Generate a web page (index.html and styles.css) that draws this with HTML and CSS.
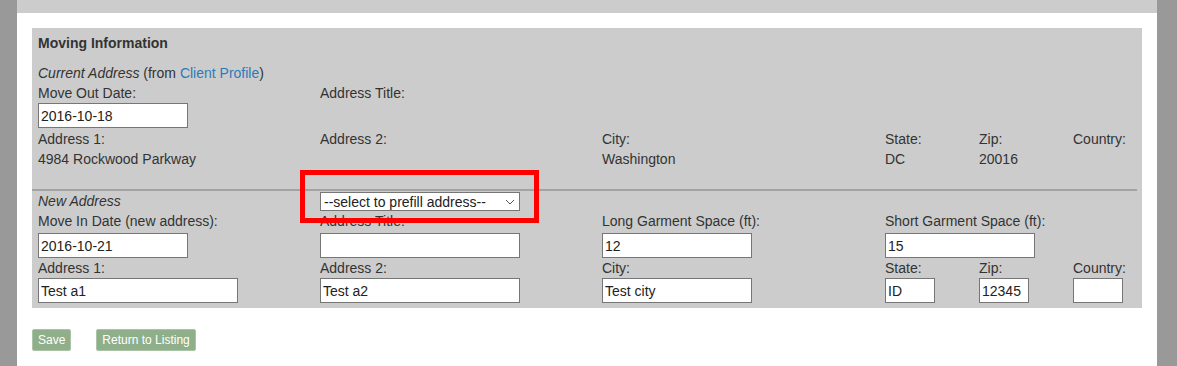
FILE: index.html
```html
<!DOCTYPE html>
<html lang="en">
<head>
<meta charset="UTF-8">
<meta name="viewport" content="width=device-width, initial-scale=1.0">
<title>Moving Information</title>
<link rel="stylesheet" href="styles.css">
</head>
<body>
<div class="page">
  <div class="topbar"></div>
  <div class="content">
    <div class="panel">
      <div class="title">Moving Information</div>

      <div class="grid">
        <div class="all"><em>Current Address</em> (from <a href="#">Client Profile</a>)</div>
        <div class="c1">Move Out Date:</div>
        <div class="c2">Address Title:</div>
        <div class="c1"><input class="w150 first" type="text" value="2016-10-18"></div>
        <div class="c1">Address 1:</div>
        <div class="c2">Address 2:</div>
        <div class="c3">City:</div>
        <div class="c4">State:</div>
        <div class="c5">Zip:</div>
        <div class="c6">Country:</div>
        <div class="c1">4984 Rockwood Parkway</div>
        <div class="c3">Washington</div>
        <div class="c4">DC</div>
        <div class="c5">20016</div>

        <div class="divider"></div>

        <div class="c1"><em>New Address</em></div>
        <div class="c2">
          <div class="select-wrap">
            <select class="prefill">
              <option>--select to prefill address--</option>
            </select>
            <svg class="chevron" width="10" height="6" viewBox="0 0 10 6"><path d="M1 1l4 4 4-4" fill="none" stroke="#555" stroke-width="1"/></svg>
          </div>
        </div>
        <div class="c1">Move In Date (new address):</div>
        <div class="c2">Address Title:</div>
        <div class="c3">Long Garment Space (ft):</div>
        <div class="c4 wide">Short Garment Space (ft):</div>
        <div class="c1"><input class="w150 gap" type="text" value="2016-10-21"></div>
        <div class="c2"><input class="w200 gap" type="text" value=""></div>
        <div class="c3"><input class="w150 gap" type="text" value="12"></div>
        <div class="c4 wide"><input class="w150 gap" type="text" value="15"></div>
        <div class="c1">Address 1:</div>
        <div class="c2">Address 2:</div>
        <div class="c3">City:</div>
        <div class="c4">State:</div>
        <div class="c5">Zip:</div>
        <div class="c6">Country:</div>
        <div class="c1"><input class="w200" type="text" value="Test a1"></div>
        <div class="c2"><input class="w200" type="text" value="Test a2"></div>
        <div class="c3"><input class="w150" type="text" value="Test city"></div>
        <div class="c4"><input class="w50" type="text" value="ID"></div>
        <div class="c5"><input class="w50" type="text" value="12345"></div>
        <div class="c6"><input class="w50" type="text" value=""></div>
      </div>
    </div>

    <div class="actions">
      <button class="btn">Save</button>
      <button class="btn">Return to Listing</button>
    </div>
  </div>

  <!-- highlight drawn over the screenshot -->
  <div class="highlight"></div>
</div>
</body>
</html>
```

FILE: styles.css
```css
body {
  margin: 0;
  padding: 0 20px 0 17px;
  background-color: #999;
  font-family: "Liberation Sans", Arial, sans-serif;
  font-size: 14px;
  color: #333;
  height: 366px;
  overflow: hidden;
}
.page {
  background-color: #fff;
  height: 366px;
}
.topbar {
  height: 13px;
  background-color: #ccc;
}
.content {
  padding: 15px 15px 0 15px;
}
.panel {
  background-color: #ccc;
  padding: 5px 5px 5px 6px;
}
.title {
  font-weight: bold;
  line-height: 20px;
  margin-bottom: 10px;
}
.grid {
  display: grid;
  grid-template-columns: 282px 282px 283px 94px 94px 1fr;
  line-height: 20px;
}
.all { grid-column: 1 / -1; }
.c1 { grid-column: 1; }
.c2 { grid-column: 2; }
.c3 { grid-column: 3; }
.c4 { grid-column: 4; }
.c5 { grid-column: 5; }
.c6 { grid-column: 6; }
.c4.wide { grid-column: 4 / -1; }

a {
  color: #2d7ab9;
  text-decoration: none;
}
input {
  display: block;
  box-sizing: border-box;
  height: 25px;
  border: 1px solid #767676;
  padding: 0 2px;
  margin: 0;
  font-family: "Liberation Sans", Arial, sans-serif;
  font-size: 14px;
  color: #222;
  background-color: #fff;
}
input.first { margin-bottom: 1px; }
input.gap { margin-top: 2px; }
.w50 { width: 50px; }
.w150 { width: 150px; }
.w200 { width: 200px; }

.divider {
  grid-column: 1 / -1;
  margin: 20px 0 0 -6px;
  height: 2px;
  background-color: #a3a3a3;
}
.select-wrap {
  position: relative;
  width: 200px;
  margin-top: 1px;
}
.prefill {
  display: block;
  box-sizing: border-box;
  width: 200px;
  height: 19px;
  border: 1px solid #767676;
  border-radius: 0;
  background-color: #fff;
  font-family: "Liberation Sans", Arial, sans-serif;
  font-size: 14px;
  color: #222;
  padding: 0 0 0 3px;
  appearance: none;
  -webkit-appearance: none;
}
.chevron {
  position: absolute;
  right: 5px;
  top: 7px;
  pointer-events: none;
}
.actions {
  display: flex;
  gap: 25px;
  margin-top: 21px;
}
.btn {
  height: 22px;
  padding: 0 5px;
  border: 1px solid #abc3a7;
  border-radius: 2px;
  background-color: #8fae8a;
  color: #fff;
  font-family: "Liberation Sans", Arial, sans-serif;
  font-size: 12px;
}
.highlight {
  position: absolute;
  left: 300px;
  top: 170px;
  width: 239px;
  height: 53px;
  box-sizing: border-box;
  border: 5px solid #f00;
}
```
